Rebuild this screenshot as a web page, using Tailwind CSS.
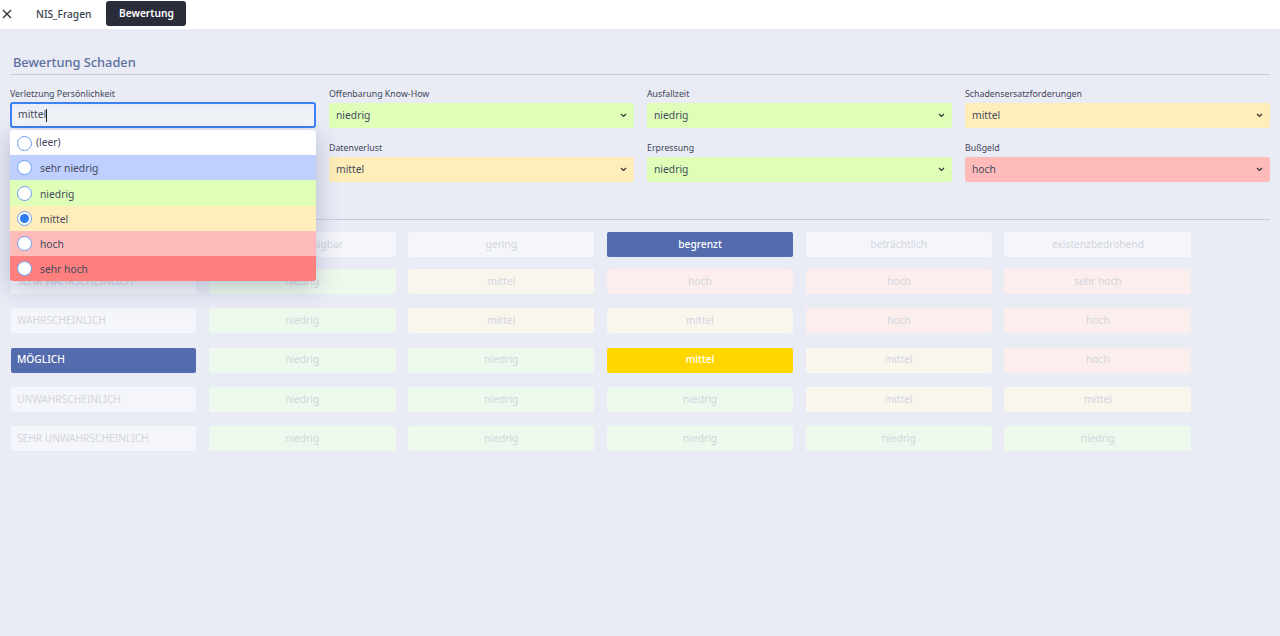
<!DOCTYPE html>
<html lang="de">
<head>
<meta charset="UTF-8">
<script src="https://cdn.jsdelivr.net/npm/@tailwindcss/browser@4"></script>
<title>Bewertung</title>
</head>
<body class="bg-[#e9ebf5] font-['Noto_Sans',sans-serif] text-[#444a5c] h-[636px] overflow-hidden">

<!-- tabs -->
<div class="h-[29px] bg-white flex items-start">
  <svg class="w-[10px] h-[10px] ml-[2px] mt-[9px]" viewBox="0 0 10 10" fill="none" stroke="#333" stroke-width="1.4"><path d="M1 1l8 8M9 1l-8 8"/></svg>
  <div class="ml-[24px] mt-[7px] text-[10.2px] leading-[15px] font-medium text-[#3a3f4f]">NIS_Fragen</div>
  <div class="ml-[15px] mt-[1px] w-[80px] h-[25px] rounded-[3px] bg-[#2a2c3a] text-white text-[10.2px] font-semibold flex items-center justify-center">Bewertung</div>
</div>

<div class="relative px-[10px] pt-[24px]">
  <h2 class="ml-[3px] text-[12.8px] leading-[18px] font-medium text-[#5d6f9f]">Bewertung Schaden</h2>
  <div class="mt-[3px] border-b border-[#c5cde2]"></div>

  <div class="grid grid-cols-[306px_305px_305px_305px] gap-x-[13px] gap-y-[13px] mt-[12px]">
    <div>
      <div class="text-[8.8px] leading-[14px] h-[14px] mb-[2px] text-[#3f4658]">Verletzung Persönlichkeit</div>
      <div class="h-[26px] -mt-[1px] rounded-[3px] border-2 border-[#3b82f6] bg-linear-to-b from-[#e9ecf5] to-[#f8f9fc] flex items-center pl-[6px] text-[10.3px]">mittel<span class="w-px h-[13px] bg-[#222]"></span></div>
    </div>
    <div>
      <div class="text-[8.8px] leading-[14px] h-[14px] mb-[2px] text-[#3f4658]">Offenbarung Know-How</div>
      <div class="h-[25px] rounded-[2px] bg-[#dfffb9] flex items-center justify-between px-[7px] text-[10.3px]">niedrig
        <svg class="w-[7px] h-[5px]" viewBox="0 0 7 5" fill="none" stroke="#333" stroke-width="1.2"><path d="M1 1l2.5 2.5L6 1"/></svg>
      </div>
    </div>
    <div>
      <div class="text-[8.8px] leading-[14px] h-[14px] mb-[2px] text-[#3f4658]">Ausfallzeit</div>
      <div class="h-[25px] rounded-[2px] bg-[#dfffb9] flex items-center justify-between px-[7px] text-[10.3px]">niedrig
        <svg class="w-[7px] h-[5px]" viewBox="0 0 7 5" fill="none" stroke="#333" stroke-width="1.2"><path d="M1 1l2.5 2.5L6 1"/></svg>
      </div>
    </div>
    <div>
      <div class="text-[8.8px] leading-[14px] h-[14px] mb-[2px] text-[#3f4658]">Schadensersatzforderungen</div>
      <div class="h-[25px] rounded-[2px] bg-[#ffeeba] flex items-center justify-between px-[7px] text-[10.3px]">mittel
        <svg class="w-[7px] h-[5px]" viewBox="0 0 7 5" fill="none" stroke="#333" stroke-width="1.2"><path d="M1 1l2.5 2.5L6 1"/></svg>
      </div>
    </div>
    <!-- this cell sits behind the open dropdown -->
    <div class="h-[41px]"></div>
    <div>
      <div class="text-[8.8px] leading-[14px] h-[14px] mb-[2px] text-[#3f4658]">Datenverlust</div>
      <div class="h-[25px] rounded-[2px] bg-[#ffeeba] flex items-center justify-between px-[7px] text-[10.3px]">mittel
        <svg class="w-[7px] h-[5px]" viewBox="0 0 7 5" fill="none" stroke="#333" stroke-width="1.2"><path d="M1 1l2.5 2.5L6 1"/></svg>
      </div>
    </div>
    <div>
      <div class="text-[8.8px] leading-[14px] h-[14px] mb-[2px] text-[#3f4658]">Erpressung</div>
      <div class="h-[25px] rounded-[2px] bg-[#dfffb9] flex items-center justify-between px-[7px] text-[10.3px]">niedrig
        <svg class="w-[7px] h-[5px]" viewBox="0 0 7 5" fill="none" stroke="#333" stroke-width="1.2"><path d="M1 1l2.5 2.5L6 1"/></svg>
      </div>
    </div>
    <div>
      <div class="text-[8.8px] leading-[14px] h-[14px] mb-[2px] text-[#3f4658]">Bußgeld</div>
      <div class="h-[25px] rounded-[2px] bg-[#ffbaba] flex items-center justify-between px-[7px] text-[10.3px]">hoch
        <svg class="w-[7px] h-[5px]" viewBox="0 0 7 5" fill="none" stroke="#333" stroke-width="1.2"><path d="M1 1l2.5 2.5L6 1"/></svg>
      </div>
    </div>
  </div>

  <div class="mt-[37px] border-b border-[#c5cde2]"></div>

  <!-- matrix header -->
  <div class="mt-[12px] ml-[1px] grid grid-cols-[185px_187px_186px_186px_186px_187px] gap-x-[12.7px] text-[10.2px] text-center text-[#d3d5dc]">
    <div class="h-[25px] rounded-[2px] bg-[#f5f6fb]"></div>
    <div class="h-[25px] rounded-[2px] bg-[#f5f6fb] flex items-center justify-center">vernachlässigbar</div>
    <div class="h-[25px] rounded-[2px] bg-[#f5f6fb] flex items-center justify-center">gering</div>
    <div class="h-[25px] rounded-[2px] bg-[#546bae] text-white font-medium flex items-center justify-center">begrenzt</div>
    <div class="h-[25px] rounded-[2px] bg-[#f5f6fb] flex items-center justify-center">beträchtlich</div>
    <div class="h-[25px] rounded-[2px] bg-[#f5f6fb] flex items-center justify-center">existenzbedrohend</div>
  </div>

  <!-- matrix rows -->
  <div class="mt-[12px] ml-[1px] grid grid-cols-[185px_187px_186px_186px_186px_187px] gap-x-[12.7px] gap-y-[14.3px] text-[10.2px] text-center text-[#d3d5dc]">
    <div class="h-[25px] rounded-[2px] bg-[#f5f6fb] flex items-center pl-[6px]">SEHR WAHRSCHEINLICH</div>
    <div class="h-[25px] rounded-[2px] bg-[#edf9ec] flex items-center justify-center">niedrig</div>
    <div class="h-[25px] rounded-[2px] bg-[#f9f6ee] flex items-center justify-center">mittel</div>
    <div class="h-[25px] rounded-[2px] bg-[#fbeeed] flex items-center justify-center">hoch</div>
    <div class="h-[25px] rounded-[2px] bg-[#fbeeed] flex items-center justify-center">hoch</div>
    <div class="h-[25px] rounded-[2px] bg-[#fbeeed] flex items-center justify-center">sehr hoch</div>

    <div class="h-[25px] rounded-[2px] bg-[#f5f6fb] flex items-center pl-[6px]">WAHRSCHEINLICH</div>
    <div class="h-[25px] rounded-[2px] bg-[#edf9ec] flex items-center justify-center">niedrig</div>
    <div class="h-[25px] rounded-[2px] bg-[#f9f6ee] flex items-center justify-center">mittel</div>
    <div class="h-[25px] rounded-[2px] bg-[#f9f6ee] flex items-center justify-center">mittel</div>
    <div class="h-[25px] rounded-[2px] bg-[#fbeeed] flex items-center justify-center">hoch</div>
    <div class="h-[25px] rounded-[2px] bg-[#fbeeed] flex items-center justify-center">hoch</div>

    <div class="h-[25px] rounded-[2px] bg-[#546bae] text-white font-medium flex items-center pl-[6px]">MÖGLICH</div>
    <div class="h-[25px] rounded-[2px] bg-[#edf9ec] flex items-center justify-center">niedrig</div>
    <div class="h-[25px] rounded-[2px] bg-[#edf9ec] flex items-center justify-center">niedrig</div>
    <div class="h-[25px] rounded-[2px] bg-[#ffd700] text-white font-medium flex items-center justify-center">mittel</div>
    <div class="h-[25px] rounded-[2px] bg-[#f9f6ee] flex items-center justify-center">mittel</div>
    <div class="h-[25px] rounded-[2px] bg-[#fbeeed] flex items-center justify-center">hoch</div>

    <div class="h-[25px] rounded-[2px] bg-[#f5f6fb] flex items-center pl-[6px]">UNWAHRSCHEINLICH</div>
    <div class="h-[25px] rounded-[2px] bg-[#edf9ec] flex items-center justify-center">niedrig</div>
    <div class="h-[25px] rounded-[2px] bg-[#edf9ec] flex items-center justify-center">niedrig</div>
    <div class="h-[25px] rounded-[2px] bg-[#edf9ec] flex items-center justify-center">niedrig</div>
    <div class="h-[25px] rounded-[2px] bg-[#f9f6ee] flex items-center justify-center">mittel</div>
    <div class="h-[25px] rounded-[2px] bg-[#f9f6ee] flex items-center justify-center">mittel</div>

    <div class="h-[25px] rounded-[2px] bg-[#f5f6fb] flex items-center pl-[6px]">SEHR UNWAHRSCHEINLICH</div>
    <div class="h-[25px] rounded-[2px] bg-[#edf9ec] flex items-center justify-center">niedrig</div>
    <div class="h-[25px] rounded-[2px] bg-[#edf9ec] flex items-center justify-center">niedrig</div>
    <div class="h-[25px] rounded-[2px] bg-[#edf9ec] flex items-center justify-center">niedrig</div>
    <div class="h-[25px] rounded-[2px] bg-[#edf9ec] flex items-center justify-center">niedrig</div>
    <div class="h-[25px] rounded-[2px] bg-[#edf9ec] flex items-center justify-center">niedrig</div>
  </div>

  <!-- open dropdown -->
  <div class="absolute left-[10px] top-[101px] w-[306px] rounded-[3px] overflow-hidden shadow-[0_6px_24px_rgba(60,70,120,0.3)] text-[10.3px] text-[#444a5c]">
    <div class="h-[25px] pt-[1px] bg-white flex items-center pl-[7px] gap-[4px]">
      <span class="w-[15px] h-[15px] rounded-full border-[1.5px] border-[#6a9cf5] bg-white"></span>(leer)
    </div>
    <div class="h-[25px] bg-[#bfcfff] flex items-center pl-[7px] gap-[8px]">
      <span class="w-[15px] h-[15px] rounded-full border-[1.5px] border-[#6a9cf5] bg-white"></span><span class="mt-[3px]">sehr niedrig</span>
    </div>
    <div class="h-[26px] bg-[#dfffb9] flex items-center pl-[7px] gap-[8px]">
      <span class="w-[15px] h-[15px] rounded-full border-[1.5px] border-[#6a9cf5] bg-white"></span><span class="mt-[3px]">niedrig</span>
    </div>
    <div class="h-[25px] bg-[#ffeeba] flex items-center pl-[7px] gap-[8px]">
      <span class="w-[15px] h-[15px] rounded-full border-[1.5px] border-[#6a9cf5] bg-white flex items-center justify-center"><span class="w-[9px] h-[9px] rounded-full bg-[#2f7bf6]"></span></span><span class="mt-[3px]">mittel</span>
    </div>
    <div class="h-[25px] bg-[#ffbaba] flex items-center pl-[7px] gap-[8px]">
      <span class="w-[15px] h-[15px] rounded-full border-[1.5px] border-[#6a9cf5] bg-white"></span><span class="mt-[3px]">hoch</span>
    </div>
    <div class="h-[25px] bg-[#ff7f7f] flex items-center pl-[7px] gap-[8px]">
      <span class="w-[15px] h-[15px] rounded-full border-[1.5px] border-[#6a9cf5] bg-white"></span><span class="mt-[3px]">sehr hoch</span>
    </div>
  </div>
</div>
</body>
</html>
